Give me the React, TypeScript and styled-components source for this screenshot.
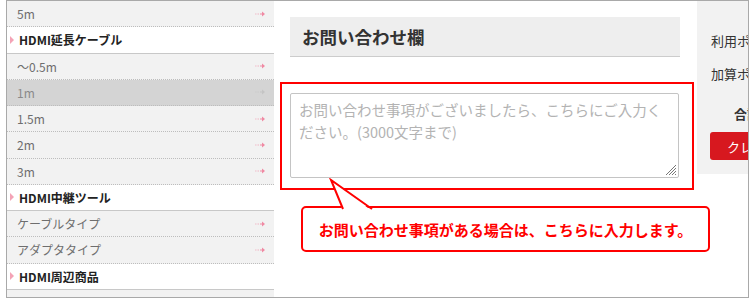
import React from "react";
import styled, { createGlobalStyle } from "styled-components";

const Global = createGlobalStyle`
  html, body { margin: 0; padding: 0; background: #fff; }
  body { font-family: "Noto Sans CJK JP", "Noto Sans", sans-serif; }
  * { box-sizing: border-box; }
`;

const Frame = styled.div`
  margin-left: 6px;
  width: 743px;
  height: 298px;
  border: 1px solid #a9a9a9;
  display: flex;
  overflow: hidden;
  background: #fff;
`;

const Sidebar = styled.div`
  width: 267px;
  flex: none;
  display: flex;
  flex-direction: column;
`;

const Item = styled.div<{ $active?: boolean }>`
  height: 26.25px;
  flex: none;
  display: flex;
  align-items: center;
  justify-content: space-between;
  padding: 0 9px 0 10px;
  background: ${(p) => (p.$active ? "#d4d4d4" : "#f2f2f2")};
  border-bottom: 1px dotted #bdbdbd;
  font-size: 12px;
  color: ${(p) => (p.$active ? "#8a8a8a" : "#6e6e6e")};
`;

const Heading = styled.div`
  height: 26.25px;
  flex: none;
  display: flex;
  align-items: center;
  gap: 5px;
  padding-left: 3px;
  background: #fff;
  border-bottom: 1px solid #c8c8c8;
  font-size: 12px;
  font-weight: 700;
  color: #222;
`;

const Triangle = styled.span`
  width: 0;
  height: 0;
  border-top: 4px solid transparent;
  border-bottom: 4px solid transparent;
  border-left: 4px solid #f4a3b6;
`;

const Arrow = ({ faint }: { faint?: boolean }) => (
  <svg width="10" height="6" viewBox="0 0 10 6">
    <g stroke={faint ? "#c4c4c4" : "#f08aa3"} fill="none" strokeWidth="1">
      <line x1="0" y1="3" x2="1.5" y2="3" opacity="0.5" />
      <line x1="2.5" y1="3" x2="4" y2="3" opacity="0.6" />
      <line x1="5" y1="3" x2="9" y2="3" />
    </g>
    <polygon points="7,0.5 10,3 7,5.5" fill={faint ? "#c4c4c4" : "#f08aa3"} />
  </svg>
);

const Main = styled.div`
  width: 423px;
  flex: none;
  padding: 16px 17px 0 16px;
  display: flex;
  flex-direction: column;
`;

const TitleBox = styled.div`
  height: 40px;
  background: #eeeeee;
  border-bottom: 1px solid #cccccc;
  display: flex;
  align-items: center;
  padding-left: 12px;
  font-size: 17.5px;
  font-weight: 700;
  color: #333;
`;

const Highlight = styled.div`
  margin: 25px -14px 0 -10px;
  border: 2px solid #ff0000;
  padding: 9px 13px 10px 8px;
`;

const AreaWrap = styled.div`
  position: relative;
  height: 85px;
`;

const Area = styled.textarea`
  display: block;
  width: 100%;
  height: 85px;
  resize: none;
  border: 1px solid #c4c4c4;
  border-radius: 2px;
  padding: 5px 8px;
  font-family: "Noto Sans CJK JP", "Noto Sans", sans-serif;
  font-size: 14.5px;
  line-height: 22px;
  color: #333;
  outline: none;
  &::placeholder { color: #b3b3b3; }
`;

const Grip = styled.svg`
  position: absolute;
  right: 2px;
  bottom: 2px;
`;

const Bubble = styled.div`
  position: relative;
  margin: 16px -30px 0 11px;
  height: 46px;
  border: 2px solid #ff0000;
  border-radius: 5px;
  display: flex;
  align-items: center;
  justify-content: center;
  font-size: 15px;
  font-weight: 700;
  color: #ff0000;
  background: #fff;
`;

const Tail = styled.svg`
  position: absolute;
  left: -2px;
  top: -30px;
`;

const Right = styled.div`
  width: 51px;
  flex: none;
  align-self: flex-start;
  height: 173px;
  background: #f2f2f2;
  display: flex;
  flex-direction: column;
  padding: 30px 0 0 14px;
  font-size: 13px;
  color: #333;
  white-space: nowrap;
  overflow: hidden;
`;

const Label = styled.div`
  height: 20px;
  line-height: 20px;
  margin-bottom: 13px;
`;

const Total = styled.div`
  font-weight: 700;
  padding-left: 23px;
  margin-top: 9px;
  line-height: 16px;
`;

const RedButton = styled.div`
  margin-top: 10px;
  margin-left: -1px;
  height: 28px;
  width: 60px;
  background: #d7181f;
  border-radius: 3px;
  color: #fff;
  display: flex;
  align-items: center;
  padding-left: 17px;
  font-size: 13px;
`;

export default function App() {
  return (
    <>
      <Global />
      <Frame>
        <Sidebar>
          <Item>5m<Arrow /></Item>
          <Heading><Triangle />HDMI延長ケーブル</Heading>
          <Item>～0.5m<Arrow /></Item>
          <Item $active>1m<Arrow faint /></Item>
          <Item>1.5m<Arrow /></Item>
          <Item>2m<Arrow /></Item>
          <Item>3m<Arrow /></Item>
          <Heading><Triangle />HDMI中継ツール</Heading>
          <Item>ケーブルタイプ<Arrow /></Item>
          <Item>アダプタタイプ<Arrow /></Item>
          <Heading><Triangle />HDMI周辺商品</Heading>
          <Item>リピーター<Arrow /></Item>
        </Sidebar>
        <Main>
          <TitleBox>お問い合わせ欄</TitleBox>
          <Highlight>
            <AreaWrap>
              <Area placeholder="お問い合わせ事項がございましたら、こちらにご入力ください。(3000文字まで)" />
              <Grip width="12" height="12" viewBox="0 0 12 12">
                <g stroke="#777" strokeWidth="1">
                  <line x1="11" y1="1" x2="1" y2="11" />
                  <line x1="11" y1="4" x2="4" y2="11" />
                  <line x1="11" y1="7" x2="7" y2="11" />
                  <line x1="11" y1="10" x2="10" y2="11" />
                </g>
              </Grip>
            </AreaWrap>
          </Highlight>
          <Bubble>
            <Tail width="80" height="34" viewBox="0 0 80 34">
              <polygon points="42,33 30,2 71,33" fill="#fff" />
              <polyline points="42,31 30,2 71,31" fill="none" stroke="#ff0000" strokeWidth="2" strokeLinejoin="miter" />
            </Tail>
            お問い合わせ事項がある場合は、こちらに入力します。
          </Bubble>
        </Main>
        <Right>
          <Label>利用ポイント</Label>
          <Label>加算ポイント</Label>
          <Total>合計</Total>
          <RedButton>クレジット</RedButton>
        </Right>
      </Frame>
    </>
  );
}
